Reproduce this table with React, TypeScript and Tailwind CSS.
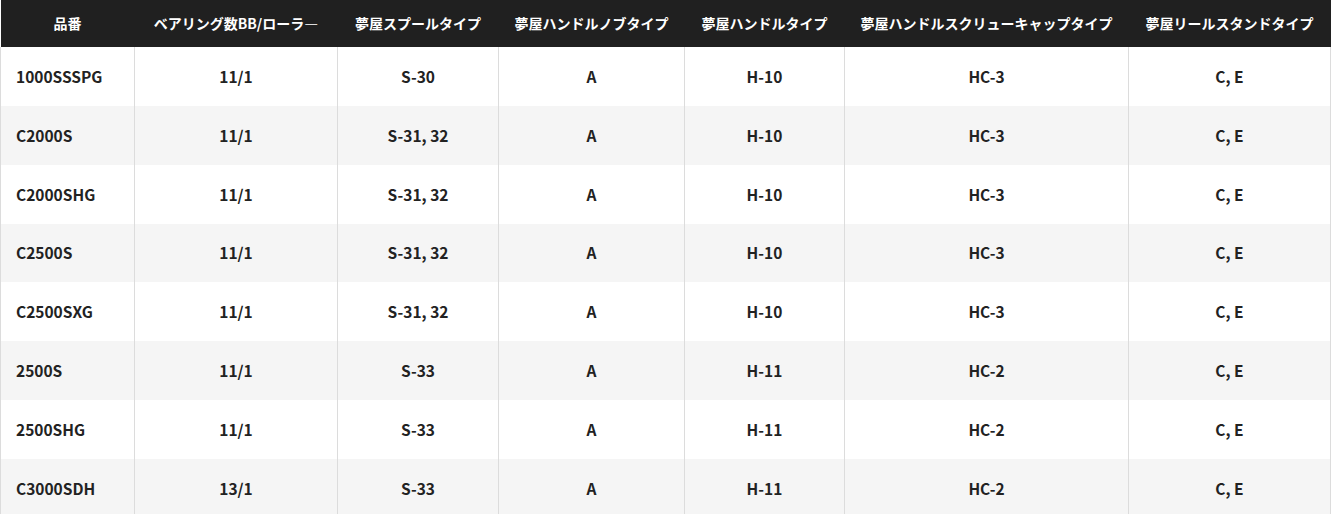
import React from 'react';

const headers = [
  '品番',
  'ベアリング数BB/ローラ―',
  '夢屋スプールタイプ',
  '夢屋ハンドルノブタイプ',
  '夢屋ハンドルタイプ',
  '夢屋ハンドルスクリューキャップタイプ',
  '夢屋リールスタンドタイプ',
];

const widths = ['w-[134px]', 'w-[203px]', 'w-[161px]', 'w-[186px]', 'w-[160px]', 'w-[284px]', 'w-[202px]'];

const rows = [
  ['1000SSSPG', '11/1', 'S-30', 'A', 'H-10', 'HC-3', 'C, E'],
  ['C2000S', '11/1', 'S-31, 32', 'A', 'H-10', 'HC-3', 'C, E'],
  ['C2000SHG', '11/1', 'S-31, 32', 'A', 'H-10', 'HC-3', 'C, E'],
  ['C2500S', '11/1', 'S-31, 32', 'A', 'H-10', 'HC-3', 'C, E'],
  ['C2500SXG', '11/1', 'S-31, 32', 'A', 'H-10', 'HC-3', 'C, E'],
  ['2500S', '11/1', 'S-33', 'A', 'H-11', 'HC-2', 'C, E'],
  ['2500SHG', '11/1', 'S-33', 'A', 'H-11', 'HC-2', 'C, E'],
  ['C3000SDH', '13/1', 'S-33', 'A', 'H-11', 'HC-2', 'C, E'],
];

export default function App() {
  return (
    <div className="w-[1332px] h-[514px] overflow-hidden bg-white font-['Noto_Sans_CJK_JP',sans-serif]">
      <table className="w-[1331px] table-fixed border-collapse">
        <thead>
          <tr className="h-[47px] bg-[#202020]">
            {headers.map((h, i) => (
              <th key={i} className={`${widths[i]} p-0 text-center text-[14px] font-bold text-white whitespace-nowrap`}>
                {h}
              </th>
            ))}
          </tr>
        </thead>
        <tbody>
          {rows.map((r, ri) => (
            <tr key={ri} className={ri % 2 === 0 ? 'h-[58.86px] bg-white' : 'h-[58.86px] bg-[#f5f5f5]'}>
              {r.map((c, ci) => (
                <td
                  key={ci}
                  className={
                    ci === 0
                      ? 'border-x border-[#dcdcdc] p-0 pl-[15px] text-left text-[15.5px] font-bold text-[#222]'
                      : 'border-x border-[#dcdcdc] p-0 text-center text-[15.5px] font-bold text-[#222]'
                  }
                >
                  {c}
                </td>
              ))}
            </tr>
          ))}
        </tbody>
      </table>
    </div>
  );
}
